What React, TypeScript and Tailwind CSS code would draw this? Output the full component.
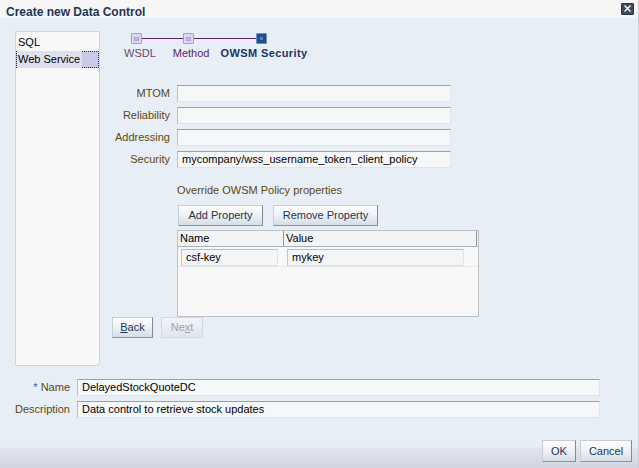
import React from "react";

const inputCls =
  "h-[17px] bg-[#f6f7f9] border border-[#dfe4ea] border-t-[#98a1ab] border-l-[#b9c0c8] px-[4px] flex items-center text-[11px] text-black leading-none";

const btnCls =
  "h-[21px] flex items-center justify-center text-[11px] text-[#1d3553] bg-gradient-to-b from-[#fdfdfe] via-[#eef1f5] to-[#d6dde6] border border-[#c6cdd5] border-r-[#7f8a97] border-b-[#8a95a2]";

function Stop({ active }: { active?: boolean }) {
  if (active) {
    return (
      <div className="w-[11px] h-[11px] bg-[#1e4f8e] border border-[#6d8fbf] rounded-[1px] flex items-center justify-center">
        <div className="w-[3px] h-[3px] bg-[#5c82b8]" />
      </div>
    );
  }
  return (
    <div className="w-[11px] h-[11px] bg-[#ddd6f0] border border-[#a79bd0] rounded-[1px] flex items-center justify-center">
      <div className="w-[5px] h-[4px] bg-[#c2b7e2] border border-[#b1a5d8]" />
    </div>
  );
}

function Row({ label, value }: { label: string; value?: string }) {
  return (
    <div className="flex items-center h-[17px]">
      <div className="w-[58px] text-right text-[11px] text-[#5a4810] leading-none">{label}</div>
      <div className={inputCls + " ml-[7px] w-[274px]"}>{value}</div>
    </div>
  );
}

export default function App() {
  return (
    <div className="w-[639px] h-[468px] bg-[#e8eef6] flex flex-col overflow-hidden font-['Liberation_Sans',Arial,sans-serif] border-r border-[#c9ced6]">
      {/* title bar */}
      <div className="h-[18px] bg-[#f6f6f6] flex items-end justify-between shrink-0">
        <div className="pl-[6px] text-[12px] font-bold text-[#1f3553] leading-none">
          Create new Data Control
        </div>
        <div className="mr-[4px] mb-[1px] w-[13px] h-[12px] bg-[#3f4b5c] border border-[#2a3442] rounded-[1px] flex items-center justify-center self-center">
          <svg width="9" height="9" viewBox="0 0 9 9">
            <path d="M1.5 1.5 L7.5 7.5 M7.5 1.5 L1.5 7.5" stroke="#ffffff" strokeWidth="1.4" />
          </svg>
        </div>
      </div>

      {/* main */}
      <div className="flex mt-[13px]">
        {/* left list */}
        <div className="ml-[15px] w-[85px] h-[335px] bg-[#f8f8f8] border border-[#cfd5dc] rounded-br-[4px] pt-[2px] flex flex-col">
          <div className="h-[17px] flex items-center pl-[2px] text-[11px] text-black">SQL</div>
          <div className="h-[17px] flex items-center bg-[#c9cae9] border border-dotted border-[#1b2a5c] text-[11px] text-black">
            <span className="bg-[#dde1ee] pl-[1px] pr-[2px]">Web Service</span>
          </div>
        </div>

        {/* right column */}
        <div className="ml-[12px] w-[368px] flex flex-col">
          {/* train */}
          <div className="flex items-center mt-[2px] ml-[19px]">
            <Stop />
            <div className="w-[41px] h-[1px] bg-[#5e1f6e]" />
            <Stop />
            <div className="w-[62px] h-[1px] bg-[#5e1f6e]" />
            <Stop active />
          </div>
          <div className="flex items-center mt-[3px] text-[11px] leading-[13px]">
            <span className="ml-[12px] text-[#5d4a72]">WSDL</span>
            <span className="ml-[17px] text-[#5a1f66]">Method</span>
            <span className="ml-[11px] font-bold text-[#1a3664] tracking-[0.4px]">OWSM Security</span>
          </div>

          {/* form */}
          <div className="flex flex-col gap-[5px] mt-[25px]">
            <Row label="MTOM" />
            <Row label="Reliability" />
            <Row label="Addressing" />
            <Row label="Security" value="mycompany/wss_username_token_client_policy" />
          </div>

          <div className="ml-[65px] mt-[16px] text-[11px] leading-[13px] text-[#5a4810]">
            Override OWSM Policy properties
          </div>

          <div className="flex ml-[66px] mt-[8px] gap-[10px]">
            <div className={btnCls + " w-[85px]"}>Add Property</div>
            <div className={btnCls + " w-[105px]"}>Remove Property</div>
          </div>

          {/* table */}
          <div className="ml-[65px] mt-[4px] w-[302px] h-[87px] bg-[#f8f8f8] border border-[#b9c0c8] flex flex-col">
            <div className="h-[16px] flex border-b border-[#a7afb8] bg-[#f3f4f6] text-[11px] text-black">
              <div className="w-[106px] pl-[2px] flex items-center border-r border-[#8e98a3]">Name</div>
              <div className="flex-1 pl-[2px] flex items-center border-r border-[#8e98a3] mr-[1px]">Value</div>
            </div>
            <div className="flex mt-[2px] h-[18px] border-b border-[#e4e8ec]">
              <div className="w-[106px] pl-[3px] pr-[6px]">
                <div className="h-[17px] bg-[#f4f5f7] border border-[#dfe3e8] border-t-[#b6bdc5] border-l-[#c2c8cf] flex items-center pl-[4px] text-[11px] text-black">
                  csf-key
                </div>
              </div>
              <div className="w-[180px] pl-[3px]">
                <div className="h-[17px] bg-[#f4f5f7] border border-[#dfe3e8] border-t-[#b6bdc5] border-l-[#c2c8cf] flex items-center pl-[4px] text-[11px] text-black">
                  mykey
                </div>
              </div>
            </div>
          </div>

          {/* back / next */}
          <div className="flex gap-[8px] mt-0">
            <div className={btnCls + " w-[41px]"}>
              <span><span className="underline">B</span>ack</span>
            </div>
            <div className="h-[21px] w-[42px] flex items-center justify-center text-[11px] text-[#9aa4b0] bg-gradient-to-b from-[#f2f4f7] to-[#e1e6ec] border border-[#d3d9e0]">
              <span>Ne<span className="underline">x</span>t</span>
            </div>
          </div>
        </div>
      </div>

      {/* name / description */}
      <div className="flex flex-col gap-[5px] mt-[13px]">
        <div className="flex items-center h-[17px]">
          <div className="w-[70px] text-right text-[11px] leading-none text-[#5a4810]">
            <span className="text-[#2c5aa0]">* </span>Name
          </div>
          <div className={inputCls + " ml-[7px] w-[523px]"}>DelayedStockQuoteDC</div>
        </div>
        <div className="flex items-center h-[17px]">
          <div className="w-[70px] text-right text-[11px] leading-none text-[#5a4810]">Description</div>
          <div className={inputCls + " ml-[7px] w-[523px]"}>Data control to retrieve stock updates</div>
        </div>
      </div>

      <div className="flex-1" />

      {/* footer */}
      <div className="h-[30px] shrink-0 flex justify-end items-start pt-[2px] pr-[6px] gap-[4px] bg-[linear-gradient(to_bottom,#e8eef6_0px,#e8eef6_9px,#dfe3eb_11px,#d3d6e1_100%)]">
        <div className={btnCls + " w-[34px] h-[22px]"}>OK</div>
        <div className={btnCls + " w-[52px] h-[22px]"}>Cancel</div>
      </div>
    </div>
  );
}
